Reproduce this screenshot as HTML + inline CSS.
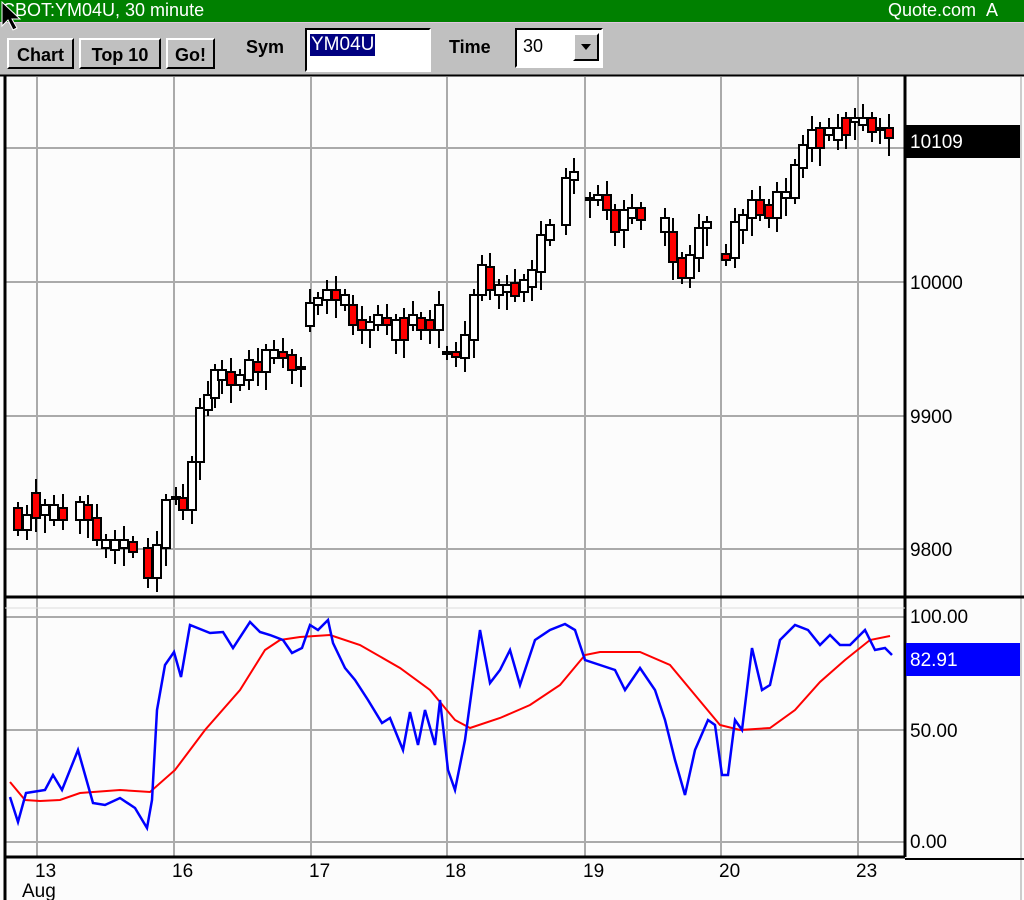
<!DOCTYPE html>
<html><head><meta charset="utf-8"><style>
html,body{margin:0;padding:0;width:1024px;height:900px;overflow:hidden;background:#fff;font-family:"Liberation Sans",sans-serif}
#title{position:absolute;left:0;top:0;width:1024px;height:22px;background:#008000;color:#fff;font-size:18px;line-height:21px;border-bottom:1px solid #e0c8e0}
#tb{position:absolute;left:0;top:23px;width:1024px;height:52px;background:#c0c0c0}
.btn{position:absolute;top:15px;height:31px;background:#c0c0c0;border:2px solid;border-color:#fff #000 #000 #fff;font-weight:bold;font-size:18px;line-height:31px;text-align:center;box-sizing:border-box;color:#000}
.lbl{position:absolute;top:14px;font-weight:bold;font-size:18px;color:#000}
</style></head><body>
<div id="title"><span style="position:absolute;left:2px">CBOT:YM04U, 30 minute</span><span style="position:absolute;left:888px">Quote.com &nbsp;A</span></div>
<div id="tb">
<div class="btn" style="left:7px;width:67px">Chart</div>
<div class="btn" style="left:79px;width:82px">Top 10</div>
<div class="btn" style="left:166px;width:49px">Go!</div>
<div class="lbl" style="left:246px">Sym</div>
<div style="position:absolute;left:305px;top:5px;width:126px;height:44px;background:#fff;border:2px solid;border-color:#000 #fff #fff #000;box-sizing:border-box"><span style="position:absolute;left:3px;top:4px;background:#000080;color:#fff;font-size:19px;line-height:22px;padding:0 1px">YM04U</span></div>
<div class="lbl" style="left:449px">Time</div>
<div style="position:absolute;left:515px;top:5px;width:88px;height:40px;background:#fff;border:2px solid;border-color:#000 #fff #fff #000;box-sizing:border-box"><span style="position:absolute;left:6px;top:6px;font-size:18px">30</span><div style="position:absolute;right:2px;top:3px;width:26px;height:28px;background:#c0c0c0;border:2px solid;border-color:#fff #000 #000 #fff;box-sizing:border-box"><div style="position:absolute;left:6px;top:9px;border-left:5px solid transparent;border-right:5px solid transparent;border-top:6px solid #000"></div></div></div>
</div>
<svg id="ch" width="1024" height="900" style="position:absolute;left:0;top:0" xmlns="http://www.w3.org/2000/svg">
<rect x="0" y="75" width="1024" height="825" fill="#fcfcfc"/>
<line x1="0" y1="75.5" x2="1024" y2="75.5" stroke="#000" stroke-width="2"/>
<g stroke="#aaa" stroke-width="2">
<line x1="37" y1="77" x2="37" y2="857"/><line x1="174" y1="77" x2="174" y2="857"/><line x1="311" y1="77" x2="311" y2="857"/><line x1="447" y1="77" x2="447" y2="857"/><line x1="585" y1="77" x2="585" y2="857"/><line x1="721" y1="77" x2="721" y2="857"/><line x1="858" y1="77" x2="858" y2="857"/>
<line x1="5" y1="148" x2="905" y2="148"/><line x1="5" y1="282" x2="905" y2="282"/><line x1="5" y1="416" x2="905" y2="416"/><line x1="5" y1="549" x2="905" y2="549"/>
<line x1="5" y1="617" x2="905" y2="617"/><line x1="5" y1="730" x2="905" y2="730"/><line x1="5" y1="842" x2="905" y2="842"/>
</g>
<line x1="1021" y1="77" x2="1021" y2="900" stroke="#ccc" stroke-width="2"/>
<g stroke="#000" stroke-width="3">
<line x1="5" y1="76" x2="5" y2="900"/>
<line x1="905" y1="76" x2="905" y2="857"/>
<line x1="5" y1="597" x2="1024" y2="597"/>
<line x1="5" y1="857" x2="905" y2="857"/>
</g>
<line x1="905" y1="859" x2="1024" y2="859" stroke="#000" stroke-width="2"/>
<line x1="5" y1="608" x2="905" y2="608" stroke="#ddd" stroke-width="1"/>
<g id="cd"></g>
<polyline id="red" fill="none" stroke="#ff0000" stroke-width="2"/>
<polyline id="blue" fill="none" stroke="#0000ff" stroke-width="2.5"/>
<rect x="906" y="125" width="114" height="33" fill="#000"/>
<rect x="906" y="643" width="114" height="33" fill="#0000ff"/>
<g font-family="Liberation Sans,sans-serif" font-size="19">
<text x="910" y="148" fill="#fff">10109</text>
<text x="910" y="289">10000</text><text x="910" y="423">9900</text><text x="910" y="556">9800</text>
<text x="910" y="623">100.00</text><text x="910" y="737">50.00</text><text x="910" y="848">0.00</text>
<text x="910" y="666" fill="#fff">82.91</text>
<text x="35" y="877">13</text><text x="22" y="897">Aug</text>
<text x="172" y="877">16</text><text x="309" y="877">17</text><text x="445" y="877">18</text><text x="583" y="877">19</text><text x="719" y="877">20</text><text x="856" y="877">23</text>
</g>
<path d="M2 2 L2 26 L8 20 L13 30 L17 28 L12 19 L20 19 Z" fill="#000" stroke="#fff" stroke-width="1"/>
</svg>
<script>
var C=[[18,'r',508,530],[27,'w',515,530],[36,'r',493,518],[45,'w',505,515],[54,'w',505,520],[63,'r',508,520],[80,'w',502,520],[88,'r',505,520],[97,'r',518,540],[106,'w',540,548],[115,'w',540,550],[124,'w',540,548],[133,'r',542,552],[148,'r',548,578],[157,'w',545,578],[166,'w',500,548],[176,'w',497,499],[183,'r',498,510],[192,'w',462,510],[200,'w',408,462],[208,'w',395,410],[215,'w',370,398],[222,'w',370,380],[231,'r',372,385],[240,'w',375,385],[249,'w',360,380],[258,'r',362,372],[266,'w',350,372],[274,'w',350,358],[283,'r',352,358],[292,'r',355,370],[301,'w',367,369],[310,'w',303,326],[318,'w',298,305],[327,'w',290,300],[336,'r',290,300],[345,'w',295,305],[353,'r',305,325],[362,'r',320,330],[370,'w',322,330],[378,'w',315,325],[387,'r',318,325],[396,'w',320,340],[404,'r',318,340],[413,'w',315,325],[421,'r',318,330],[430,'r',320,330],[439,'w',305,330],[447,'w',352,354],[456,'r',352,357],[465,'w',335,358],[474,'w',295,340],[482,'w',265,295],[490,'r',267,290],[499,'w',285,295],[507,'w',285,292],[515,'r',283,296],[524,'w',280,292],[532,'w',270,287],[541,'w',235,272],[550,'w',225,240],[566,'w',178,225],[574,'w',172,180],[590,'w',198,200],[598,'w',195,200],[607,'r',195,210],[615,'r',210,232],[624,'w',210,230],[632,'w',208,218],[641,'r',208,220],[665,'w',218,232],[673,'r',232,262],[682,'r',258,278],[690,'w',255,278],[699,'w',228,258],[707,'w',222,228],[726,'r',254,260],[735,'w',222,258],[743,'w',215,230],[752,'w',200,218],[760,'r',200,215],[769,'r',205,218],[777,'w',192,218],[786,'w',192,198],[795,'w',165,198],[803,'w',145,168],[812,'w',130,148],[820,'r',128,148],[829,'w',128,135],[838,'w',128,140],[846,'r',118,135],[855,'w',118,122],[863,'w',118,125],[872,'r',118,132],[880,'w',128,130],[889,'r',128,138]];
var s='';C.forEach(function(c,i){var h=Math.max(2,c[3]-c[2]);var t=c[2]-6-(i%3)*4,b=c[3]+6+(i%4)*4;
s+='<line x1="'+c[0]+'" y1="'+t+'" x2="'+c[0]+'" y2="'+b+'" stroke="#000" stroke-width="2"/>';
s+='<rect x="'+(c[0]-4)+'" y="'+c[2]+'" width="8" height="'+h+'" fill="'+(c[1]=='r'?'#ff0000':'#fff')+'" stroke="#000" stroke-width="2"/>';});
document.getElementById('cd').innerHTML=s;
document.getElementById('blue').setAttribute('points','10,797 18,822 26,793 45,790 53,775 62,790 78,750 93,803 105,805 120,798 135,808 147,828 152,800 157,710 165,665 174,652 181,677 190,625 210,633 223,632 233,648 250,622 260,632 270,635 283,640 292,653 302,648 310,625 318,630 328,620 333,643 345,668 355,680 368,700 382,723 390,718 403,750 410,712 418,745 425,710 435,745 440,700 448,770 455,790 465,740 480,630 490,683 500,670 510,650 520,685 535,640 550,630 565,624 575,630 585,660 600,665 615,670 625,690 640,668 655,690 665,720 675,760 685,795 695,750 708,720 715,725 722,775 728,775 735,720 742,730 752,648 762,690 770,685 780,640 795,625 808,630 820,645 830,635 840,645 850,645 865,630 875,650 885,648 892,655');
document.getElementById('red').setAttribute('points','10,782 25,800 40,801 60,800 80,793 120,790 150,792 175,770 205,730 240,690 265,650 280,640 300,637 330,635 360,645 400,668 430,690 455,720 470,728 500,718 530,705 560,685 585,655 600,652 640,652 670,665 695,695 720,725 740,730 770,728 795,710 820,682 845,660 870,640 890,636');
</script>
</body></html>
